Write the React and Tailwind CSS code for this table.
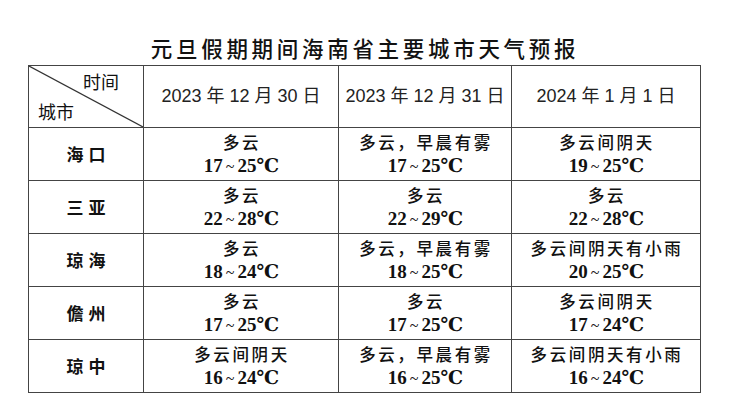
import React from 'react'

const rows = [
  { city: '海口', cells: [['多云', '17', '25'], ['多云，早晨有雾', '17', '25'], ['多云间阴天', '19', '25']] },
  { city: '三亚', cells: [['多云', '22', '28'], ['多云', '22', '29'], ['多云', '22', '28']] },
  { city: '琼海', cells: [['多云', '18', '24'], ['多云，早晨有雾', '18', '25'], ['多云间阴天有小雨', '20', '25']] },
  { city: '儋州', cells: [['多云', '17', '25'], ['多云', '17', '25'], ['多云间阴天', '17', '24']] },
  { city: '琼中', cells: [['多云间阴天', '16', '24'], ['多云，早晨有雾', '16', '25'], ['多云间阴天有小雨', '16', '24']] },
]

const dates = ['2023 年 12 月 30 日', '2023 年 12 月 31 日', '2024 年 1 月 1 日']

const cjk = "font-['Noto_Sans_CJK_SC',sans-serif]"

const App = () => {
  return (
    <div className="w-[730px] h-[417px] bg-white text-[#111] overflow-hidden">
      <h1 className={`pt-[33px] text-center text-[21.5px] leading-[30px] font-medium tracking-[3.7px] ${cjk}`}>
        元旦假期期间海南省主要城市天气预报
      </h1>
      <table className="mt-[2px] ml-[28px] border-collapse table-fixed w-[672px] border-[1.5px] border-[#444]">
        <colgroup>
          <col className="w-[115px]" />
          <col className="w-[195px]" />
          <col className="w-[173px]" />
          <col className="w-[189px]" />
        </colgroup>
        <thead>
          <tr className="h-[62px]">
            <th className={`relative p-0 border-[1.5px] border-[#444] font-normal text-[18px] ${cjk}`}>
              <svg className="absolute inset-0 w-full h-full" preserveAspectRatio="none" viewBox="0 0 100 100">
                <line x1="0" y1="0" x2="100" y2="100" stroke="#333" strokeWidth="1.2" vectorEffect="non-scaling-stroke" />
              </svg>
              <div className="relative flex flex-col h-[60px] justify-between pt-[3px] pb-[5px]">
                <span className="self-end pr-[24px] leading-[22px]">时间</span>
                <span className="self-start pl-[9px] leading-[22px]">城市</span>
              </div>
            </th>
            {dates.map((d) => (
              <th key={d} className="p-0 border-[1.5px] border-[#444] font-normal text-[18px] text-[#222] font-['Liberation_Sans','Noto_Sans_CJK_SC',sans-serif]">
                {d}
              </th>
            ))}
          </tr>
        </thead>
        <tbody>
          {rows.map((r) => (
            <tr key={r.city} className="h-[53px]">
              <td className={`p-0 border-[1.5px] border-[#444] text-center text-[17px] font-bold tracking-[5px] pl-[5px] ${cjk}`}>
                {r.city}
              </td>
              {r.cells.map(([w, lo, hi], i) => (
                <td key={i} className="p-0 border-[1.5px] border-[#444] text-center">
                  <div className={`text-[16.5px] leading-[23px] font-medium tracking-[2.6px] pl-[2px] ${cjk}`}>{w}</div>
                  <div className="text-[19px] leading-[23px] font-bold font-['Liberation_Serif','DejaVu_Serif',serif]">
                    {lo}
                    <span className="inline-block px-[3px] text-[16px] font-normal">~</span>
                    {hi}
                    <span className="tracking-[-1px]">℃</span>
                  </div>
                </td>
              ))}
            </tr>
          ))}
        </tbody>
      </table>
    </div>
  )
}

export default App
